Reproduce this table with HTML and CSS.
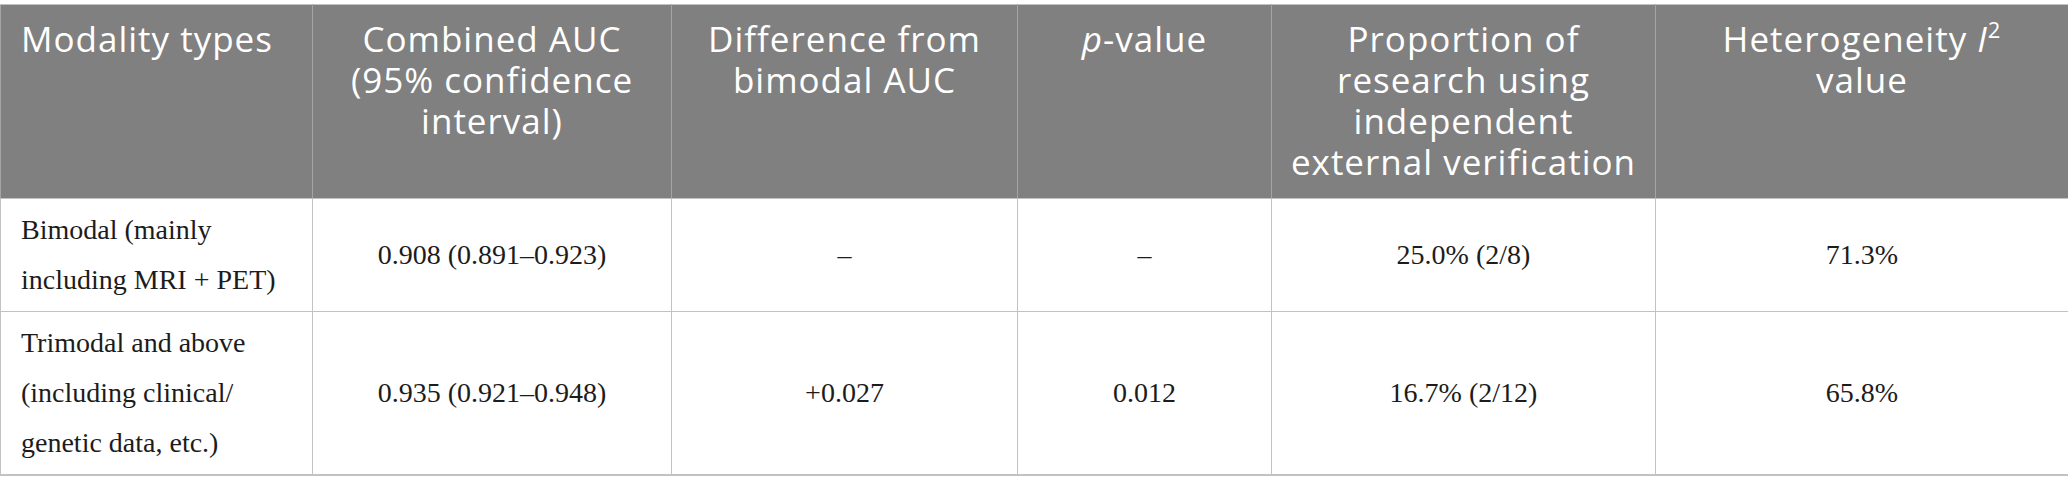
FILE: index.html
```html
<!DOCTYPE html>
<html lang="en">
<head>
    <meta charset="UTF-8">
    <meta name="viewport" content="width=device-width, initial-scale=1.0">
    <title>Modality comparison table</title>
    <link rel="stylesheet" href="styles.css">
</head>
<body>
    <div class="table-wrap">
        <table class="data-table">
            <colgroup>
                <col class="col-type">
                <col class="col-auc">
                <col class="col-diff">
                <col class="col-p">
                <col class="col-prop">
                <col class="col-het">
            </colgroup>
            <thead>
                <tr>
                    <th class="first">Modality types</th>
                    <th>Combined AUC<br>(95% confidence<br>interval)</th>
                    <th>Difference from<br>bimodal AUC</th>
                    <th><i>p</i>-value</th>
                    <th>Proportion of<br>research using<br>independent<br>external verification</th>
                    <th>Heterogeneity <i>I</i><sup>2</sup><br>value</th>
                </tr>
            </thead>
            <tbody>
                <tr>
                    <td class="first">Bimodal (mainly<br>including MRI + PET)</td>
                    <td>0.908 (0.891–0.923)</td>
                    <td>–</td>
                    <td>–</td>
                    <td>25.0% (2/8)</td>
                    <td>71.3%</td>
                </tr>
                <tr>
                    <td class="first">Trimodal and above<br>(including clinical/<br>genetic data, etc.)</td>
                    <td>0.935 (0.921–0.948)</td>
                    <td>+0.027</td>
                    <td>0.012</td>
                    <td>16.7% (2/12)</td>
                    <td>65.8%</td>
                </tr>
            </tbody>
        </table>
    </div>
</body>
</html>
```

FILE: styles.css
```css
body {
    margin: 0;
    padding: 0;
    background: #ffffff;
}

.table-wrap {
    padding-top: 4px;
}

.data-table {
    width: 2068px;
    table-layout: fixed;
    border-collapse: collapse;
    border: 1px solid #c2c2c2;
    border-bottom-width: 2px;
}

.col-type { width: 312px; }
.col-auc  { width: 359px; }
.col-diff { width: 346px; }
.col-p    { width: 254px; }
.col-prop { width: 384px; }
.col-het  { width: 413px; }

.data-table th {
    background: #7f807f;
    color: #ffffff;
    font-family: 'Open Sans', 'Noto Sans', sans-serif;
    font-weight: 400;
    font-size: 35px;
    line-height: 41px;
    letter-spacing: 1px;
    text-align: center;
    vertical-align: top;
    padding: 13px 12px 16px;
    border: 1px solid #a3a4a3;
    border-top-color: #c2c2c2;
    border-bottom-color: #c2c2c2;
}

.data-table th sup {
    font-size: 22px;
    line-height: 0;
    vertical-align: 14px;
}

.data-table td {
    font-family: 'Liberation Serif', 'Times New Roman', serif;
    font-size: 28px;
    line-height: 50px;
    color: #1c1c1c;
    text-align: center;
    vertical-align: middle;
    padding: 6px 20px;
    border: 1px solid #c2c2c2;
}

.data-table .first {
    text-align: left;
    padding-left: 20px;
    padding-right: 8px;
}
```
